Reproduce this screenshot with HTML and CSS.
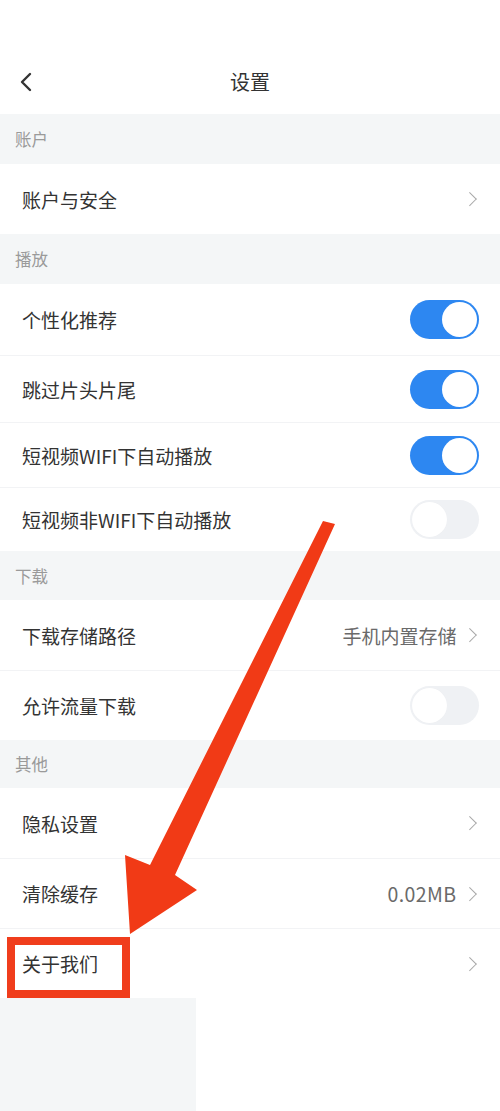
FILE: index.html
```html
<!DOCTYPE html>
<html lang="zh-CN">
<head>
<meta charset="utf-8">
<title>设置</title>
<link rel="stylesheet" href="styles.css">
</head>
<body>
<div class="page">
  <header class="header">
    <svg class="back" width="14" height="20" viewBox="0 0 14 20"><path d="M11 2 L3 10 L11 18" fill="none" stroke="#333" stroke-width="2.4" stroke-linecap="round" stroke-linejoin="round"/></svg>
    <h1 class="title">设置</h1>
  </header>

  <div class="sec h50">账户</div>
  <div class="row h70"><span class="label">账户与安全</span><span class="right"><i class="chev"></i></span></div>

  <div class="sec h50">播放</div>
  <div class="row h71"><span class="label">个性化推荐</span><span class="switch on"><b></b></span></div>
  <div class="row line h67"><span class="label">跳过片头片尾</span><span class="switch on"><b></b></span></div>
  <div class="row line h65"><span class="label">短视频WIFI下自动播放</span><span class="switch on"><b></b></span></div>
  <div class="row line h64"><span class="label">短视频非WIFI下自动播放</span><span class="switch"><b></b></span></div>

  <div class="sec h49">下载</div>
  <div class="row h70"><span class="label">下载存储路径</span><span class="right"><span class="value">手机内置存储</span><i class="chev"></i></span></div>
  <div class="row line h70"><span class="label">允许流量下载</span><span class="switch"><b></b></span></div>

  <div class="sec h48">其他</div>
  <div class="row h70"><span class="label">隐私设置</span><span class="right"><i class="chev"></i></span></div>
  <div class="row line h70"><span class="label">清除缓存</span><span class="right"><span class="value num">0.02MB</span><i class="chev"></i></span></div>
  <div class="row line h70"><span class="label">关于我们</span><span class="right"><i class="chev"></i></span></div>

  <div class="bottom-fill"></div>

  <div class="mark-box"></div>
  <svg class="mark-arrow" viewBox="0 0 500 1111" width="500" height="1111">
    <polygon points="323,521 335,524 175,875 197,890 130,934 125,855 150,865" fill="#f13a16"/>
  </svg>
</div>
</body>
</html>
```

FILE: styles.css
```css
* { box-sizing: border-box; }
html, body { margin: 0; padding: 0; background: #ffffff; }
body {
  font-family: "Noto Sans CJK SC", "Noto Sans", sans-serif;
  color: #333333;
}
.page {
  position: relative;
  width: 500px;
  height: 1111px;
  overflow: hidden;
  background: #ffffff;
}
.header {
  position: relative;
  height: 114px;
  padding-top: 50px;
  display: flex;
  align-items: center;
  justify-content: center;
}
.back {
  position: absolute;
  left: 19px;
  top: 72px;
}
.title {
  margin: 0;
  font-size: 20px;
  font-weight: 400;
  color: #333;
  line-height: 64px;
  height: 64px;
}
.sec {
  background: #f4f6f7;
  color: #9a9a9a;
  font-size: 16.5px;
  padding-left: 15px;
  display: flex;
  align-items: center;
}
.row {
  display: flex;
  align-items: center;
  justify-content: space-between;
  padding: 0 21px 0 22px;
  background: #fff;
}
.row.line { border-top: 1px solid #f2f3f5; }
.h48 { height: 48px; }
.h49 { height: 49px; }
.h50 { height: 50px; }
.h64 { height: 64px; }
.h65 { height: 65px; }
.h67 { height: 67px; }
.h70 { height: 70px; }
.h71 { height: 71px; }
.label {
  font-size: 19px;
  color: #333;
}
.right {
  display: flex;
  align-items: center;
  gap: 8px;
  padding-right: 2px;
}
.value {
  font-size: 19px;
  color: #6a6a6a;
}
.value.num {
  font-size: 19.5px;
  letter-spacing: 0.4px;
}
.chev {
  display: block;
  width: 9.5px;
  height: 9.5px;
  border-top: 1.6px solid #a8a8a8;
  border-right: 1.6px solid #a8a8a8;
  transform: rotate(45deg);
  margin-right: 3px;
}
.switch {
  position: relative;
  width: 69px;
  height: 39px;
  border-radius: 20px;
  background: #eff1f4;
  display: block;
}
.switch b {
  position: absolute;
  top: 2px;
  left: 2px;
  width: 35px;
  height: 35px;
  border-radius: 50%;
  background: #fff;
  box-shadow: 0 0 1px rgba(0,0,0,0.04);
}
.switch.on { background: #2d87f1; }
.switch.on b { left: 32px; box-shadow: none; }
.bottom-fill {
  width: 196px;
  height: 113px;
  background: #f4f6f7;
}
.mark-box {
  position: absolute;
  left: 7px;
  top: 937px;
  width: 123px;
  height: 61px;
  border: 8px solid #f03d1c;
}
.mark-arrow {
  position: absolute;
  left: 0;
  top: 0;
  pointer-events: none;
}
```
